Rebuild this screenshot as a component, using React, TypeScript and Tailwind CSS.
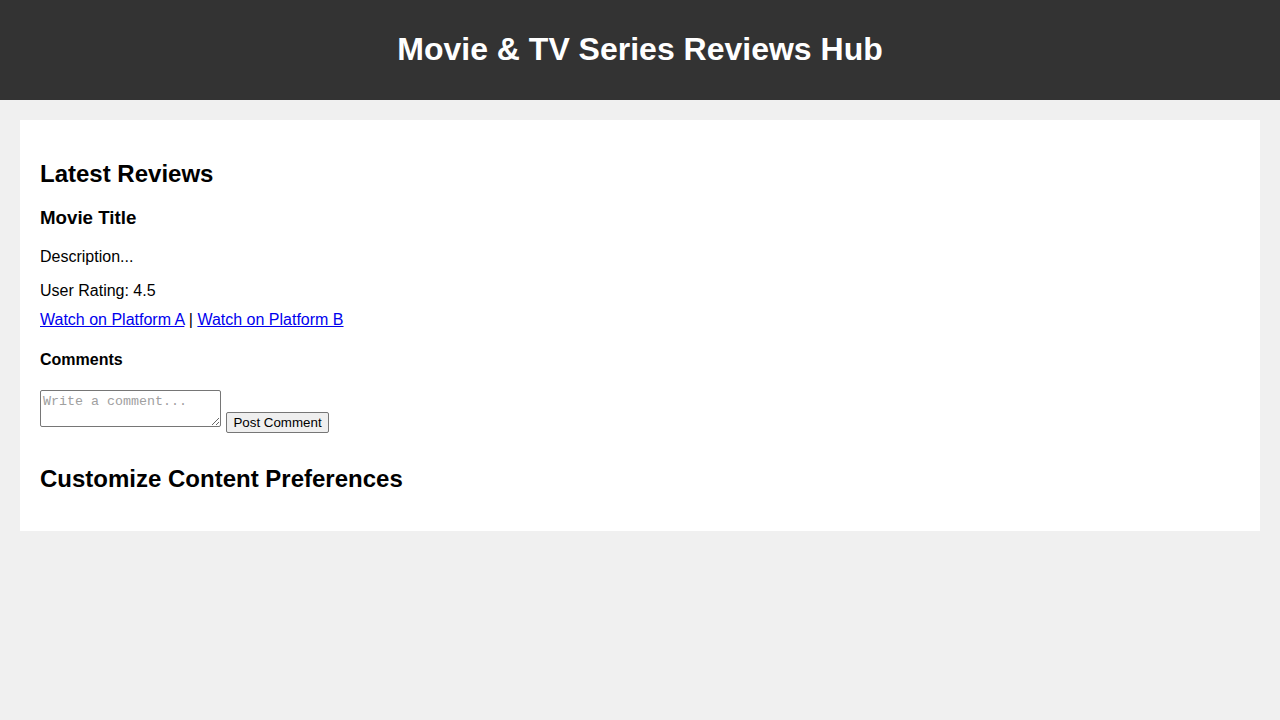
import React from 'react';

function App() {
  return (
    <div className="min-h-screen bg-[#f0f0f0] text-black font-['Liberation_Sans',Arial,sans-serif] leading-[1.15]">
      <header className="bg-[#333333] text-white text-center py-[10px]">
        <h1 className="text-[32px] font-bold my-[21.44px] leading-[37px]">Movie &amp; TV Series Reviews Hub</h1>
      </header>

      <main className="m-[20px]">
        <section className="bg-white p-[20px]">
          <h2 className="text-[24px] font-bold mt-[20px] mb-[20px] leading-[27.6px]">Latest Reviews</h2>

          <div>
            <h3 className="text-[18.72px] font-bold mb-[18.72px] leading-[21.5px]">Movie Title</h3>
            <p className="text-[16px] my-[16px] leading-[18.4px]">Description...</p>
            <p className="text-[16px] mt-[16px] leading-[18.4px]">User Rating: 4.5</p>
            <div className="text-[16px] mt-[10px] leading-[18.4px]">
              <a href="#" className="text-[#0000ee] underline">Watch on Platform A</a>
              {' | '}
              <a href="#" className="text-[#0000ee] underline">Watch on Platform B</a>
            </div>

            <h4 className="text-[16px] font-bold mt-[22px] mb-[20.4px] leading-[18.4px]">Comments</h4>
            <form className="text-[16px] leading-[18.4px]">
              <textarea
                placeholder="Write a comment..."
                className="inline-block align-baseline w-[181px] h-[37px] border border-[#767676] rounded-[2px] px-[2px] pt-[3px] font-['Liberation_Mono',monospace] text-[13.33px] leading-[15px] placeholder:text-[#a0a0a0] resize"
              />{' '}
              <button
                type="button"
                className="inline-block align-baseline bg-[#efefef] border border-[#767676] rounded-[2px] px-[6px] py-[2px] ml-[1px] text-[13.33px] leading-[15px] font-['Liberation_Sans',Arial,sans-serif]"
              >
                Post Comment
              </button>
            </form>
          </div>

          <h2 className="text-[24px] font-bold mt-[32px] mb-[19px] leading-[27.6px]">Customize Content Preferences</h2>
        </section>
      </main>
    </div>
  );
}

export default App;
